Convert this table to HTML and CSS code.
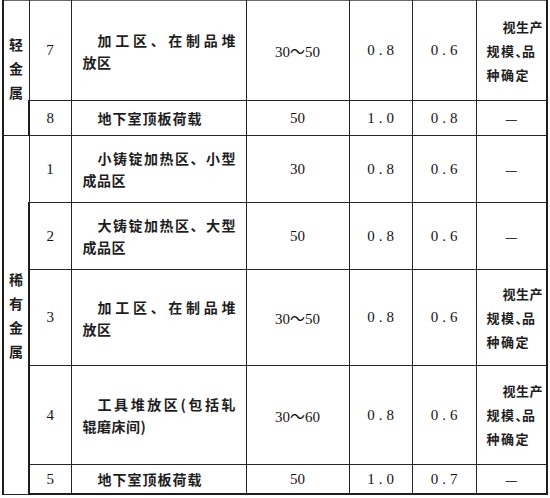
FILE: index.html
```html
<!DOCTYPE html>
<html lang="zh-CN">
<head>
<meta charset="utf-8">
<title>荷载表</title>
<link rel="stylesheet" href="styles.css">
</head>
<body>
<table class="grid">
  <colgroup>
    <col class="c-grp"><col class="c-no"><col class="c-desc"><col class="c-load"><col class="c-a"><col class="c-b"><col class="c-rem">
  </colgroup>
  <tbody>
    <tr class="r-7 top">
      <td class="grp" rowspan="2"><div class="vt">轻<br>金<br>属</div></td>
      <td class="no">7</td>
      <td class="desc"><div class="l1 just">加工区、在制品堆</div><div class="l2">放区</div></td>
      <td class="num">30～50</td>
      <td class="num dec">0.8</td>
      <td class="num dec">0.6</td>
      <td class="rem"><div class="rl1">视生产</div><div class="rl">规模<span class="half">、</span>品</div><div class="rl">种确定</div></td>
    </tr>
    <tr class="r-8 gend">
      <td class="no">8</td>
      <td class="desc"><div class="l1">地下室顶板荷载</div></td>
      <td class="num">50</td>
      <td class="num dec">1.0</td>
      <td class="num dec">0.8</td>
      <td class="rem dash">—</td>
    </tr>
    <tr class="r-1">
      <td class="grp" rowspan="5"><div class="vt">稀<br>有<br>金<br>属</div></td>
      <td class="no">1</td>
      <td class="desc"><div class="l1 just">小铸锭加热区、小型</div><div class="l2">成品区</div></td>
      <td class="num">30</td>
      <td class="num dec">0.8</td>
      <td class="num dec">0.6</td>
      <td class="rem dash">—</td>
    </tr>
    <tr class="r-2">
      <td class="no">2</td>
      <td class="desc"><div class="l1 just">大铸锭加热区、大型</div><div class="l2">成品区</div></td>
      <td class="num">50</td>
      <td class="num dec">0.8</td>
      <td class="num dec">0.6</td>
      <td class="rem dash">—</td>
    </tr>
    <tr class="r-3">
      <td class="no">3</td>
      <td class="desc"><div class="l1 just">加工区、在制品堆</div><div class="l2">放区</div></td>
      <td class="num">30～50</td>
      <td class="num dec">0.8</td>
      <td class="num dec">0.6</td>
      <td class="rem"><div class="rl1">视生产</div><div class="rl">规模<span class="half">、</span>品</div><div class="rl">种确定</div></td>
    </tr>
    <tr class="r-4">
      <td class="no">4</td>
      <td class="desc"><div class="l1 just">工具堆放区(包括轧</div><div class="l2">辊磨床间)</div></td>
      <td class="num">30～60</td>
      <td class="num dec">0.8</td>
      <td class="num dec">0.6</td>
      <td class="rem"><div class="rl1">视生产</div><div class="rl">规模<span class="half">、</span>品</div><div class="rl">种确定</div></td>
    </tr>
    <tr class="r-5 last">
      <td class="no">5</td>
      <td class="desc"><div class="l1">地下室顶板荷载</div></td>
      <td class="num">50</td>
      <td class="num dec">1.0</td>
      <td class="num dec">0.7</td>
      <td class="rem dash">—</td>
    </tr>
  </tbody>
</table>
</body>
</html>
```

FILE: styles.css
```css
html, body {
  margin: 0;
  padding: 0;
  background: #ffffff;
}

.grid {
  border-collapse: collapse;
  table-layout: fixed;
  width: 545px;
  margin-left: 2px;
  font-family: "Noto Sans CJK SC", sans-serif;
  font-weight: 700;
  font-size: 14px;
  color: #1e1e1e;
}

.c-grp { width: 26px; }
.c-no { width: 42px; }
.c-desc { width: 175px; }
.c-load { width: 103px; }
.c-a { width: 63px; }
.c-b { width: 64px; }
.c-rem { width: 71px; }

.grid td {
  border: 1.5px solid #262626;
  padding: 0;
  vertical-align: middle;
  text-align: center;
}

.grid tr.top td { border-top: 1px solid #6a6a6a; }
.grid tr.last td { border-bottom: 2px solid #1e1e1e; }
.grid td:first-child { border-left: 2px solid #1e1e1e; }
.grid td:last-child { border-right: 2px solid #1e1e1e; }

.r-7 td { height: 99px; }
.r-8 td { height: 34px; }
.r-1 td { height: 66px; }
.r-2 td { height: 66px; }
.r-3 td { height: 95px; }
.r-4 td { height: 98px; }
.r-5 td { height: 28px; }

.vt {
  line-height: 24px;
  font-size: 14px;
}

.grid td.no,
.grid td.num {
  font-family: "Liberation Serif", "Noto Sans CJK SC", serif;
  font-weight: 400;
  font-size: 15px;
  color: #141414;
}

.grid td.dec {
  letter-spacing: 4px;
  text-indent: 4px;
}

.grid td.desc {
  text-align: left;
  padding: 0 10px 0 11px;
  line-height: 22px;
}

.desc .l1 {
  padding-left: 15px;
  letter-spacing: 1px;
}

.desc .l1.just {
  letter-spacing: 0;
  text-align: justify;
  text-align-last: justify;
}

.desc .l2 {
  letter-spacing: 0.5px;
}

.grid td.rem {
  text-align: left;
  padding: 0 4px 0 10px;
  font-size: 13px;
  line-height: 24px;
}

.rem .rl1 {
  padding-left: 16px;
  letter-spacing: 0.5px;
  white-space: nowrap;
}

.rem .rl {
  letter-spacing: 1.5px;
  white-space: nowrap;
}

.half {
  font-feature-settings: "halt" 1;
  letter-spacing: 0;
}

.grid td.rem.dash {
  text-align: center;
  font-weight: 400;
  font-size: 14px;
  color: #333;
  padding: 0;
}
```
